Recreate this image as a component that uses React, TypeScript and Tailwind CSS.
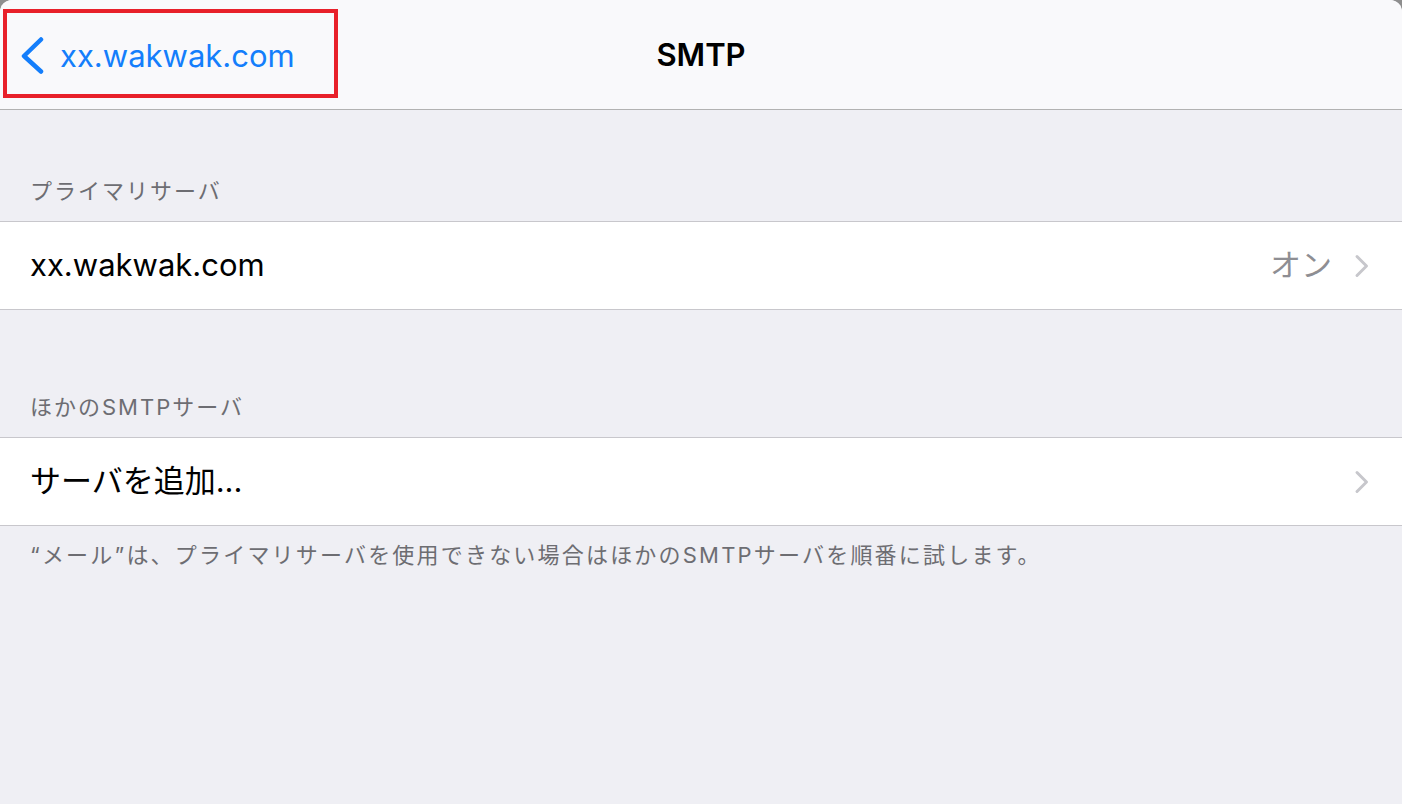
import React from 'react';

const font = { fontFamily: '"Inter", "Noto Sans CJK JP", sans-serif' };

const Chevron: React.FC = () => (
  <svg width="16" height="24" viewBox="0 0 16 24" className="shrink-0">
    <path d="M3 2.5 L12.5 12 L3 21.5" fill="none" stroke="#c7c7cc" strokeWidth="3" strokeLinecap="round" strokeLinejoin="round" />
  </svg>
);

const SectionHeader: React.FC<{ children: React.ReactNode }> = ({ children }) => (
  <div className="px-[30px] pb-[15px] text-[22px] leading-[30px] tracking-[2px] text-[#6d6d72]">{children}</div>
);

const Row: React.FC<{ label: string; detail?: string }> = ({ label, detail }) => (
  <div className="h-[89px] bg-white border-y border-[#c8c7cc] flex items-center pl-[30px] pr-[32px]">
    <span className="text-[31px] text-black flex-1">{label}</span>
    {detail && <span className="text-[31px] text-[#8e8e93] mr-[22px]">{detail}</span>}
    <Chevron />
  </div>
);

export default function App() {
  return (
    <div className="w-[1402px] h-[804px] bg-[#8e8e8e] overflow-hidden" style={font}>
      <div className="w-full h-full bg-[#efeff4] rounded-t-[12px] overflow-hidden flex flex-col">
        <header className="relative h-[110px] bg-[#f9f9fb] border-b border-[#b2b2b2] flex items-center justify-center shrink-0">
          <div className="absolute left-[3px] top-[9px] w-[335px] h-[89px] border-[4px] border-[#e8202a]" />
          <div className="absolute left-[20px] top-[36px] flex items-center gap-[14px]">
            <svg width="26" height="38" viewBox="0 0 26 38">
              <path d="M21 3.5 L4 20 L21 35.5" fill="none" stroke="#147efb" strokeWidth="4.5" strokeLinecap="round" strokeLinejoin="round" />
            </svg>
            <span className="text-[31px] text-[#147efb] leading-none">xx.wakwak.com</span>
          </div>
          <h1 className="text-[31px] font-semibold text-black mt-[2px]">SMTP</h1>
        </header>

        <div className="pt-[66px]">
          <SectionHeader>プライマリサーバ</SectionHeader>
          <Row label="xx.wakwak.com" detail="オン" />
        </div>

        <div className="pt-[82px]">
          <SectionHeader>ほかのSMTPサーバ</SectionHeader>
          <Row label="サーバを追加..." />
          <p className="px-[30px] pt-[14px] text-[22px] leading-[30px] tracking-[2.2px] text-[#6d6d72]">
            “メール”は、プライマリサーバを使用できない場合はほかのSMTPサーバを順番に試します。
          </p>
        </div>
      </div>
    </div>
  );
}
